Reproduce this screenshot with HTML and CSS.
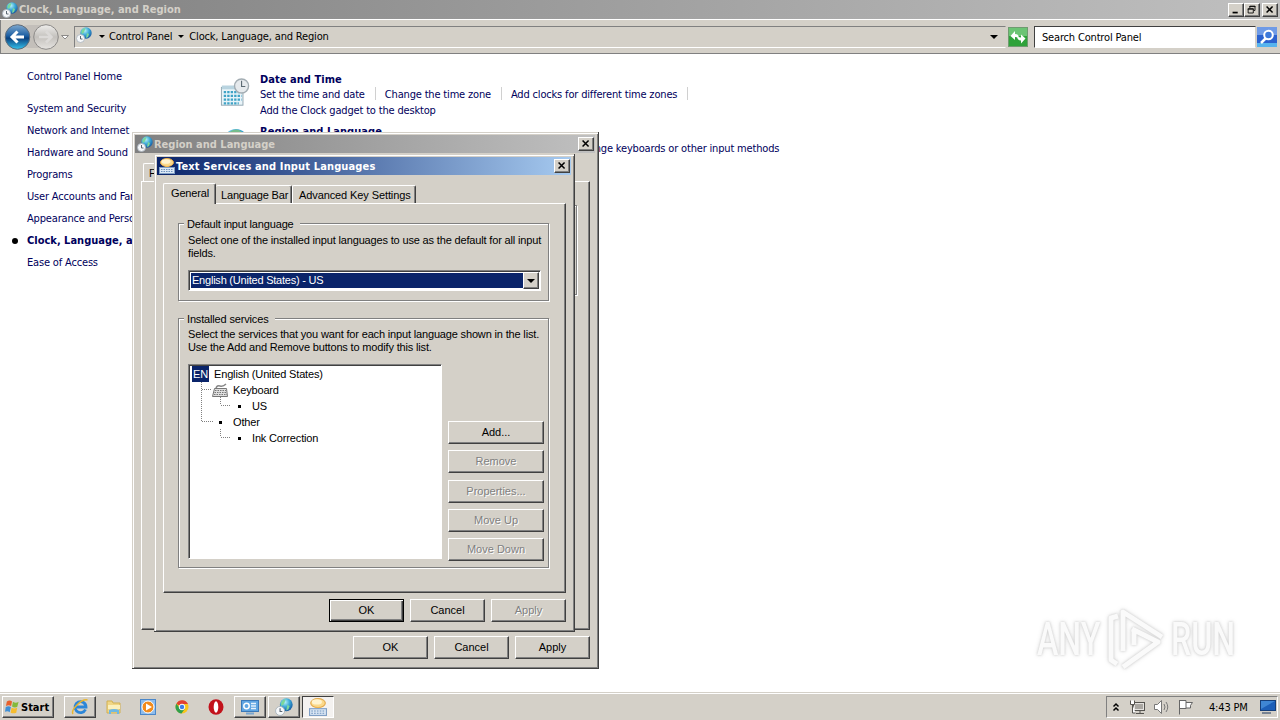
FILE: index.html
```
<!DOCTYPE html>
<html lang="en">

<head>
  <meta charset="utf-8">
  <title>Clock, Language, and Region</title>
  <link rel="stylesheet" href="styles.css">
</head>

<body>
  <svg class="defs" width="0" height="0">
    <defs>
      <radialGradient id="gglobe" cx="40%" cy="30%" r="75%">
        <stop offset="0" stop-color="#b4f2f8" />
        <stop offset=".5" stop-color="#3aa6d6" />
        <stop offset="1" stop-color="#14529c" />
      </radialGradient>
      <linearGradient id="gback" x1="0" y1="0" x2="0" y2="1">
        <stop offset="0" stop-color="#7fa9cf" />
        <stop offset=".45" stop-color="#1d5fa3" />
        <stop offset=".55" stop-color="#0b4180" />
        <stop offset="1" stop-color="#35c4ee" />
      </linearGradient>
      <linearGradient id="gfwd" x1="0" y1="0" x2="0" y2="1">
        <stop offset="0" stop-color="#efeeec" />
        <stop offset=".5" stop-color="#c4c1bd" />
        <stop offset="1" stop-color="#e6e4e1" />
      </linearGradient>
    </defs>
    <symbol id="globe" viewBox="0 0 16 16">
      <circle cx="10" cy="6" r="5.700" fill="url(#gglobe)" />
      <path d="M5.500 4q1.500-3 4-3l-1 3-1 2-2 1zM11 6l2 1-1 3-2 1z" fill="#7ad79b" />
      <circle cx="4.500" cy="11.500" r="4" fill="#f6f8fa" stroke="#a8b3bc" stroke-width=".8" />
      <path d="M4.500 9v3h2" fill="none" stroke="#5a6672" />
    </symbol>
    <symbol id="keys" viewBox="0 0 16 16">
      <ellipse cx="8" cy="4.500" rx="6.500" ry="4" fill="#fbd98a" stroke="#e3a94a" />
      <ellipse cx="7" cy="3.500" rx="4.500" ry="2.300" fill="#fff3cf" />
      <path d="M6 8h4l-2 3z" fill="#f0b653" />
      <rect x=".5" y="9.500" width="15" height="6" fill="#dce8f5" stroke="#7f9fc5" />
      <path d="M2 11.500h12M2 13.500h12" stroke="#6d92be" stroke-dasharray="1.500 1" />
    </symbol>
    <symbol id="cross" viewBox="0 0 16 14">
      <path d="M4 3l7 7M11 3l-7 7" stroke="#000" stroke-width="1.800" />
    </symbol>
  </svg>

  <div class="explorer">
    <div class="titlebar inactive main-title">
      <svg class="ico16"><use href="#globe" /></svg>
      <span class="title">Clock, Language, and Region</span>
      <span class="winbtn"><svg viewBox="0 0 16 14"><path d="M4 10h6" stroke="#000" stroke-width="2" /></svg></span>
      <span class="winbtn"><svg viewBox="0 0 16 14"><path d="M5.500 5V2.500h6v5H10M5 3h7M3.500 5.500h6v5h-6zM3 6h7" fill="none" stroke="#000" /></svg></span>
      <span class="winbtn close"><svg><use href="#cross" /></svg></span>
    </div>

    <div class="navbar">
      <svg class="arrows" viewBox="0 0 66 28">
        <rect x="14" y="2" width="34" height="23" rx="10" fill="#c3bfba" />
        <circle cx="13.500" cy="14" r="12.300" fill="url(#gback)" stroke="#5f6b78" />
        <path d="M20 14H9M13.500 8.500L8 14l5.500 5.500" fill="none" stroke="#fff" stroke-width="3" />
        <circle cx="42" cy="14" r="12.300" fill="url(#gfwd)" stroke="#8c8a88" />
        <path d="M35 14h12M42 8.500l5.500 5.500-5.500 5.500" fill="none" stroke="#dcdad8" stroke-width="2.500" />
        <path d="M57.500 12.500h7l-3.500 3.500z" fill="#fff" stroke="#8c8a88" />
      </svg>
      <div class="address">
        <svg class="ico16"><use href="#globe" /></svg>
        <i class="tri"></i>
        <span class="crumb">Control Panel</span>
        <i class="tri"></i>
        <span class="crumb">Clock, Language, and Region</span>
        <i class="tri big"></i>
      </div>
      <svg class="refresh" viewBox="0 0 20 20">
        <rect x=".5" y=".5" width="19" height="19" fill="#2fa23a" stroke="#6f9b70" />
        <rect x="1" y="1" width="18" height="8" fill="#6cc474" />
        <path d="M2.500 9L7 4v3q4 0 4 5-1-2-4-2v3zM17.500 11.500L13 16.500v-3q-4 0-4-5 1 2 4 2v-3z" fill="#fff" />
      </svg>
      <div class="search">Search Control Panel</div>
      <svg class="lens" viewBox="0 0 20 20">
        <rect width="20" height="20" fill="#2b62cf" />
        <rect width="20" height="8" fill="#6f9be6" />
        <rect y="16" width="20" height="4" fill="#56b4ee" />
        <circle cx="11.500" cy="8" r="4.300" fill="#3d79da" stroke="#fff" stroke-width="2" />
        <path d="M8.500 11.500L4 16" stroke="#fff" stroke-width="2.500" />
      </svg>
    </div>

    <div class="content">
      <ul class="side">
        <li class="home">Control Panel Home</li>
        <li>System and Security</li>
        <li>Network and Internet</li>
        <li>Hardware and Sound</li>
        <li>Programs</li>
        <li>User Accounts and Family Safety</li>
        <li>Appearance and Personalization</li>
        <li class="current">Clock, Language, and Region</li>
        <li>Ease of Access</li>
      </ul>
      <div class="items">
        <div class="item">
          <svg class="ico32" viewBox="0 0 32 32">
            <rect x="1.500" y="10" width="23" height="19" fill="#e9f4f9" stroke="#8fa5b0" />
            <rect x="2" y="8" width="22" height="4" fill="#b9d4e0" />
            <path d="M4 15h19M4 19h19M4 23h19M4 27h16" stroke="#3fa3c6" stroke-width="2.500" stroke-dasharray="2.500 1.200" />
            <circle cx="23" cy="8.500" r="7.500" fill="#e6eaed" stroke="#a3adb3" stroke-width="1.500" />
            <path d="M23 3v6h4" fill="none" stroke="#5c6a73" stroke-width="1.200" />
          </svg>
          <div class="links">
            <h3>Date and Time</h3>
            <p><span>Set the time and date</span><b></b><span>Change the time zone</span><b></b><span>Add clocks for different time zones</span><b></b></p>
            <p class="second">Add the Clock gadget to the desktop</p>
          </div>
        </div>
        <div class="item">
          <svg class="ico32 earth" viewBox="0 0 32 32"><circle cx="17" cy="14" r="13" fill="url(#gglobe)" /><path d="M9 5q8-6 14-1l-5 4-7 1z" fill="#76bd8c" /></svg>
          <div class="links">
            <h3>Region and Language</h3>
            <p class="kb">Change keyboards or other input methods</p>
          </div>
        </div>
      </div>

      <div class="watermark">
        <span>ANY</span>
        <svg viewBox="0 0 60 64">
          <path d="M12 9L5 11v42l6 4M17 44V5l39 25M26 22l26 13-35 25M28 38V22" fill="none" stroke="#fafafa" stroke-width="5" stroke-linejoin="round" />
        </svg>
        <span>RUN</span>
      </div>
    </div>

    <div class="taskbar">
      <div class="start">
        <svg viewBox="0 0 16 16"><path d="M2 2q3-2 5.500 0L6.500 7Q4 5.500 1 7z" fill="#e8602c" /><path d="M8.500 2.500q3 2 6 0L13 8q-3 1-5.500-.500z" fill="#84b93c" /><path d="M.8 8q3-1.500 5.500 0L5 13.500Q3 12 0 13z" fill="#3f8fd6" /><path d="M7 8.800q3 1.500 6 0L12 14q-3 1.500-6 0z" fill="#f6bc2e" /></svg>
        <span>Start</span>
      </div>
      <div class="task up"><svg viewBox="0 0 18 18"><path d="M14.500 11.500A5.500 5.500 0 1 1 15 9H5" fill="none" stroke="#2c86d8" stroke-width="2.800" /><path d="M2 16Q0 13 6 7t10.500-5" fill="none" stroke="#e9b52d" stroke-width="1.500" /></svg></div>
      <div class="task"><svg viewBox="0 0 18 18"><path d="M2 3h5l1 2h7v10H2z" fill="#f0d685" stroke="#d1b053" /><path d="M3 7h12v4H3z" fill="#fbf0bd" /><path d="M4 16v-4q5-2 10 0v4h-2v-2H6v2z" fill="#6db8e4" /></svg></div>
      <div class="task"><svg viewBox="0 0 18 18"><rect x="1.500" y="1.500" width="15" height="15" fill="#8dbcec" stroke="#4b87c9" /><circle cx="9" cy="9" r="6" fill="#f28b1c" stroke="#fff" /><path d="M7 5.500l6 3.500-6 3.500z" fill="#fff" /></svg></div>
      <div class="task"><svg viewBox="0 0 18 18"><circle cx="9" cy="9" r="6.500" fill="#f8c51c" /><path d="M9 9L3.400 5.700A6.500 6.500 0 0 1 15 6H9z" fill="#e23f31" /><path d="M3.400 5.700A6.500 6.500 0 0 0 8.500 15.500L12 10.500 9 9H6z" fill="#2f9f4c" /><circle cx="9" cy="9" r="2.800" fill="#3f7fe6" stroke="#fff" /></svg></div>
      <div class="task"><svg viewBox="0 0 18 18"><ellipse cx="9" cy="9" rx="7.500" ry="7.700" fill="#c2121b" /><ellipse cx="9" cy="9" rx="2.300" ry="5.800" fill="#fff" /></svg></div>
      <div class="task up"><svg viewBox="0 0 18 18"><rect x=".5" y="2.500" width="17" height="11" fill="#5fa5e2" stroke="#3b78b8" /><circle cx="5.500" cy="8" r="2.700" fill="none" stroke="#fff" stroke-width="1.500" /><path d="M10 5.500h5M10 8h5M10 10.500h5" stroke="#e5f1fb" stroke-width="1.300" /><path d="M5 15.500h8" stroke="#7ba6cf" stroke-width="2" /></svg></div>
      <div class="task up"><svg><use href="#globe" /></svg></div>
      <div class="task down"><svg><use href="#keys" /></svg></div>
      <div class="tray">
        <svg class="chev" viewBox="0 0 8 10"><path d="M1.500 4.500L4 2l2.500 2.500M1.500 8.500L4 6l2.500 2.500" fill="none" stroke="#000" stroke-width="1.500" /></svg>
        <svg class="net" viewBox="0 0 17 16"><rect x="4.500" y="3.500" width="11" height="8" fill="#e4e2df" stroke="#55534f" /><rect x="6" y="5" width="8" height="5" fill="#aaa7a2" /><path d="M7 14.500h8M11 12v2" stroke="#55534f" /><path d="M1.500 1.500v4h4v-4M3.500 5v9h3" fill="#fff" stroke="#55534f" /></svg>
        <svg class="vol" viewBox="0 0 17 16"><path d="M1.500 5.500h3l4-4v13l-4-4h-3z" fill="#fff" stroke="#777" /><path d="M11 5q2 3 0 6M13 3q3.500 5 0 10" fill="none" stroke="#777" /></svg>
        <svg class="flag" viewBox="0 0 17 16"><path d="M2.500 1v14.500M3 1.500h6v8H3M9 3.500h6.500q-3 3 -2 5.500H9" fill="#fff" stroke="#666" /></svg>
        <span class="clock">4:43 PM</span>
        <svg class="desk" viewBox="0 0 17 14"><rect x=".5" y=".5" width="15" height="10" fill="#1d5fb8" stroke="#163f7a" /><path d="M1 1h14L1 9z" fill="#3f86d4" /><path d="M2 13h9" stroke="#5a6a80" stroke-width="1.500" /></svg>
      </div>
    </div>
  </div>

  <div class="window region">
    <div class="titlebar inactive">
      <svg class="ico16"><use href="#globe" /></svg>
      <span class="title">Region and Language</span>
      <span class="winbtn close"><svg><use href="#cross" /></svg></span>
    </div>
    <div class="tabs"><div class="tab">F</div></div>
    <div class="page"><div class="group"></div></div>
    <div class="buttons">
      <div class="btn">OK</div>
      <div class="btn">Cancel</div>
      <div class="btn">Apply</div>
    </div>
  </div>

  <div class="window services">
    <div class="titlebar active">
      <svg class="ico16"><use href="#keys" /></svg>
      <span class="title">Text Services and Input Languages</span>
      <span class="winbtn close"><svg><use href="#cross" /></svg></span>
    </div>
    <div class="tabs">
      <div class="tab selected">General</div>
      <div class="tab lang">Language Bar</div>
      <div class="tab adv">Advanced Key Settings</div>
    </div>
    <div class="page">
      <div class="group default">
        <span class="legend">Default input language</span>
        <p>Select one of the installed input languages to use as the default for all input</p>
        <p>fields.</p>
        <div class="combo">
          <span>English (United States) - US</span>
          <div class="drop"><i class="tri big"></i></div>
        </div>
      </div>
      <div class="group installed">
        <span class="legend">Installed services</span>
        <p>Select the services that you want for each input language shown in the list.</p>
        <p>Use the Add and Remove buttons to modify this list.</p>
        <div class="columns">
          <div class="tree">
            <svg class="lines" viewBox="0 0 60 80">
              <path d="M11.500 17v40M12 24.500h10M12 56.500h12M30.500 32v8M31 40.500h10M30.500 64v8M31 72.500h10" fill="none" stroke="#808080" stroke-dasharray="1 1" />
            </svg>
            <div class="node"><span class="en">EN</span><span>English (United States)</span></div>
            <div class="node lv1">
              <svg viewBox="0 0 16 15"><path d="M4 5q1-3 4-2t6-2" fill="none" stroke="#888" stroke-width="1.500" /><path d="M2.500 5.500h12l1 8H.5z" fill="#e0e0e0" stroke="#777" /><path d="M3 7.500h11M2.500 9.500h12M2 11.500h13" stroke="#777" stroke-dasharray="1.500 1" /></svg>
              <span>Keyboard</span>
            </div>
            <div class="node lv2"><i></i><span>US</span></div>
            <div class="node lv1"><i></i><span>Other</span></div>
            <div class="node lv2"><i></i><span>Ink Correction</span></div>
          </div>
          <div class="actions">
            <div class="btn">Add...</div>
            <div class="btn disabled">Remove</div>
            <div class="btn disabled props">Properties...</div>
            <div class="btn disabled">Move Up</div>
            <div class="btn disabled">Move Down</div>
          </div>
        </div>
      </div>
    </div>
    <div class="buttons">
      <div class="btn focus">OK</div>
      <div class="btn">Cancel</div>
      <div class="btn disabled">Apply</div>
    </div>
  </div>
</body>

</html>
```
FILE: styles.css
```
* {
  box-sizing: border-box;
}

body {
  margin: 0;
  width: 1280px;
  height: 720px;
  overflow: hidden;
  background: #fff;
  font: 11px/13px "DejaVu Sans Condensed", "DejaVu Sans", sans-serif;
  font-stretch: condensed;
  letter-spacing: -.17px;
  color: #000;
}

p, h3, ul {
  margin: 0;
  padding: 0;
}

svg {
  display: block;
  flex: none;
}

span {
  white-space: nowrap;
}

.defs {
  position: absolute;
}

.ico16 {
  width: 16px;
  height: 16px;
}

.explorer {
  display: flex;
  flex-direction: column;
  width: 1280px;
  height: 720px;
}

/* title bars */
.titlebar {
  display: flex;
  align-items: center;
  height: 18px;
  padding: 0 1px 0 2px;
  font-weight: bold;
  letter-spacing: 0;
}

.inactive {
  background: linear-gradient(to right, #808080, #c0c0c0);
  color: #d4d0c8;
}

.active {
  background: linear-gradient(to right, #0a246a, #a6caf0);
  color: #fff;
  letter-spacing: .14px;
}

.title {
  flex: 1;
  margin-left: 1px;
}

.main-title {
  height: 19px;
  padding-right: 2px;
}

.winbtn {
  width: 16px;
  height: 14px;
  background: #d4d0c8;
  border: 1px solid;
  border-color: #fff #404040 #404040 #fff;
  box-shadow: inset -1px -1px #808080;
}

.winbtn svg {
  width: 14px;
  height: 12px;
}

.close {
  margin-left: 2px;
}

/* address row */
.navbar {
  display: flex;
  align-items: center;
  height: 35px;
  padding: 0 2px 0 4px;
  background: #d4d0c8;
  border-top: 1px solid #fff;
  border-bottom: 1px solid #808080;
  box-shadow: inset 1px 0 #808080;
}

.arrows {
  width: 66px;
  height: 28px;
}

.address {
  display: flex;
  align-items: center;
  width: 932px;
  height: 22px;
  margin-left: 4px;
  padding: 0 7px 0 1px;
  border: 1px solid;
  border-color: #808080 #d4d0c8 #fff #808080;
}

.address .ico16 {
  margin-top: -3px;
}

.tri {
  width: 0;
  height: 0;
  margin: 0 4px 0 7px;
  border: 3px solid transparent;
  border-top-color: #000;
  border-bottom: 0;
}

.crumb + .tri {
  margin: 0 5px 0 6px;
}

.crumb + .tri.big,
.big {
  margin: 0 0 0 auto;
  border-width: 4px 4px 0;
}

.refresh {
  width: 20px;
  height: 20px;
  margin: 0 6px 0 2px;
}

.search {
  width: 222px;
  height: 22px;
  padding: 4px 7px;
  background: #fff;
  border: 1px solid;
  border-color: #404040 #d4d0c8 #fff #404040;
}

.lens {
  width: 20px;
  height: 20px;
  margin-left: 1px;
}

/* control panel */
.content {
  position: relative;
  display: flex;
  flex: 1;
  color: #00005c;
}

.side {
  width: 220px;
  padding: 15px 0 0 27px;
  list-style: none;
}

.side li {
  height: 22px;
  line-height: 15px;
  white-space: nowrap;
}

.side .home {
  height: 32px;
}

.side .current {
  position: relative;
  font-weight: bold;
  letter-spacing: 0;
}

.current::before {
  content: "";
  position: absolute;
  left: -15px;
  top: 5px;
  width: 6px;
  height: 6px;
  border-radius: 3px;
  background: #000;
}

.items {
  padding-top: 19px;
}

.item {
  display: flex;
  height: 52px;
}

.item .ico32 {
  width: 30px;
  height: 32px;
  margin: 4px 10px 0 0;
}

.item .earth {
  margin-top: 2px;
}

.item h3 {
  font-size: 11px;
  line-height: 14px;
  letter-spacing: .05px;
}

.item p {
  display: flex;
  line-height: 15px;
}

.item p b {
  width: 1px;
  height: 13px;
  margin: 0 9px 0 10px;
  background: #d0d0d0;
}

.item .second {
  margin-top: 1px;
}

.item .kb {
  margin: 2px 0 0 316px;
}

.watermark {
  position: absolute;
  left: 1037px;
  top: 553px;
  display: flex;
  align-items: center;
  font: 500 46px/64px Roboto, sans-serif;
  letter-spacing: 0;
  color: #fafafa;
  filter: drop-shadow(0 0 1px #ccc) drop-shadow(0 0 2px #e4e4e4);
}

.watermark span {
  width: 65px;
  transform: scaleX(.7);
  transform-origin: left;
}

.watermark svg {
  width: 60px;
  height: 64px;
  margin: 0 5px 0 4px;
}

/* taskbar */
.taskbar {
  display: flex;
  height: 28px;
  padding: 3px 2px 0;
  background: #d4d0c8;
  border-top: 1px solid #d4d0c8;
  box-shadow: inset 0 1px #fff;
}

.start,
.task {
  display: flex;
  align-items: center;
  height: 22px;
}

.start {
  width: 52px;
  margin-right: 9px;
  padding-left: 2px;
  font-weight: bold;
  letter-spacing: 0;
}

.start svg {
  width: 15px;
  height: 16px;
  margin-right: 1px;
}

.task {
  width: 34px;
  justify-content: center;
}

.task svg {
  width: 18px;
  height: 18px;
}

.start,
.up {
  border: 1px solid;
  border-color: #fff #404040 #404040 #fff;
  box-shadow: inset -1px -1px #808080;
}

.up {
  width: 32px;
  margin: 0 1px;
}

.down {
  width: 32px;
  margin-left: 1px;
  background: #f4f2f0;
  border: 1px solid;
  border-color: #404040 #fff #fff #404040;
}

.tray {
  display: flex;
  align-items: center;
  width: 172px;
  height: 22px;
  margin-left: auto;
  padding-left: 5px;
  border: 1px solid;
  border-color: #808080 #fff #fff #808080;
}

.chev {
  width: 8px;
  height: 10px;
}

.net, .vol, .flag {
  width: 17px;
  height: 16px;
}

.net {
  margin-left: 9px;
}

.vol {
  margin: 0 7px;
}

.clock {
  width: 40px;
  margin: 0 12px 0 15px;
}

.desk {
  width: 17px;
  height: 14px;
}

/* dialogs */
.window {
  position: absolute;
  display: flex;
  flex-direction: column;
  padding: 3px;
  background: #d4d0c8;
  border-right: 1px solid #404040;
  border-bottom: 1px solid #404040;
  box-shadow: inset 1px 1px #d4d0c8, inset 2px 2px #fff, inset -1px -1px #808080;
}

.tabs,
.group,
.btn {
  font-family: "Liberation Sans", sans-serif;
  font-stretch: normal;
  letter-spacing: -.16px;
}

.region {
  left: 132px;
  top: 132px;
  width: 467px;
  height: 537px;
}

.services {
  left: 154px;
  top: 154px;
  width: 421px;
  height: 478px;
}

.tabs {
  display: flex;
  align-items: flex-end;
  height: 21px;
  margin-left: 6px;
}

.region .tabs {
  margin: 9px 0 0 8px;
  height: 19px;
}

.services .tabs {
  margin-top: 7px;
}

.tab {
  height: 18px;
  padding: 3px 4px 0 5px;
  border: 1px solid;
  border-color: #fff #404040 transparent #fff;
  border-bottom: 0;
  border-radius: 2px 2px 0 0;
  box-shadow: inset -1px 0 #808080;
  white-space: nowrap;
}

.tab.selected {
  width: 53px;
  height: 21px;
  padding: 3px 0 0 7px;
  margin-bottom: -1px;
  background: #d4d0c8;
  z-index: 1;
}

.tab.lang {
  width: 76px;
  border-left: 0;
}

.tab.adv {
  width: 124px;
  padding-left: 6px;
  letter-spacing: -.1px;
}

.page {
  width: 403px;
  height: 390px;
  margin-left: 6px;
  padding: 19px 14px 0;
  border: 1px solid;
  border-color: #fff #404040 #404040 #fff;
  box-shadow: inset -1px -1px #808080;
}

.region .page {
  width: 449px;
  height: 449px;
  padding: 23px 12px 0;
}

.group {
  position: relative;
  width: 371px;
  padding: 10px 0 0 9px;
  border: 1px solid #808080;
  box-shadow: 1px 1px #fff, inset 1px 1px #fff;
}

.region .group {
  width: 423px;
  height: 90px;
}

.default {
  height: 78px;
}

.installed {
  height: 250px;
  margin-top: 17px;
  padding-top: 9px;
}

.legend {
  position: absolute;
  top: -6px;
  left: 5px;
  padding: 0 6px 0 3px;
  background: #d4d0c8;
}

.group p {
  height: 13px;
  white-space: nowrap;
}

.combo {
  display: flex;
  width: 353px;
  height: 21px;
  margin-top: 10px;
  padding: 1px;
  background: #fff;
  border: 1px solid;
  border-color: #808080 #fff #fff #808080;
  box-shadow: inset 1px 1px #404040;
}

.combo span {
  flex: 1;
  margin: 1px 0 1px 1px;
  padding: 1px 0 0 1px;
  background: #0a246a;
  color: #fff;
  letter-spacing: -.22px;
}

.drop {
  display: flex;
  align-items: center;
  width: 16px;
  padding-right: 3px;
  background: #d4d0c8;
  border: 1px solid;
  border-color: #fff #404040 #404040 #fff;
  box-shadow: inset -1px -1px #808080;
}

.columns {
  display: flex;
  margin-top: 10px;
}

.tree {
  position: relative;
  width: 254px;
  height: 195px;
  padding: 1px 0 0 3px;
  background: #fff;
  border: 1px solid;
  border-color: #808080 #fff #fff #808080;
  box-shadow: inset 1px 1px #404040;
}

.lines {
  position: absolute;
  left: 1px;
  top: 0;
  width: 60px;
  height: 80px;
}

.node {
  display: flex;
  align-items: center;
  height: 16px;
}

.en {
  width: 17px;
  margin-right: 5px;
  background: #0a246a;
  color: #fff;
  line-height: 16px;
  text-align: center;
}

.lv1 {
  padding-left: 20px;
}

.lv1 svg {
  width: 16px;
  height: 15px;
  margin-right: 5px;
}

.lv2 {
  padding-left: 39px;
}

.node i {
  width: 3px;
  height: 3px;
  margin: 0 11px 0 7px;
  background: #000;
}

.actions {
  display: flex;
  flex-direction: column;
  gap: 6px;
  margin: 57px 0 0 6px;
}

.actions .btn {
  width: 96px;
}

.actions .props {
  margin-top: 1px;
}

.btn {
  width: 75px;
  height: 23px;
  border: 1px solid;
  border-color: #fff #404040 #404040 #fff;
  box-shadow: inset -1px -1px #808080;
  line-height: 21px;
  text-align: center;
  letter-spacing: 0;
}

.disabled {
  color: #808080;
  text-shadow: 1px 1px #fff;
}

.focus {
  border-color: #000;
  box-shadow: inset 1px 1px #fff, inset -1px -1px #404040, inset -2px -2px #808080;
}

.buttons {
  display: flex;
  justify-content: flex-end;
  gap: 6px;
  margin: 6px 5px 0 0;
}
```
